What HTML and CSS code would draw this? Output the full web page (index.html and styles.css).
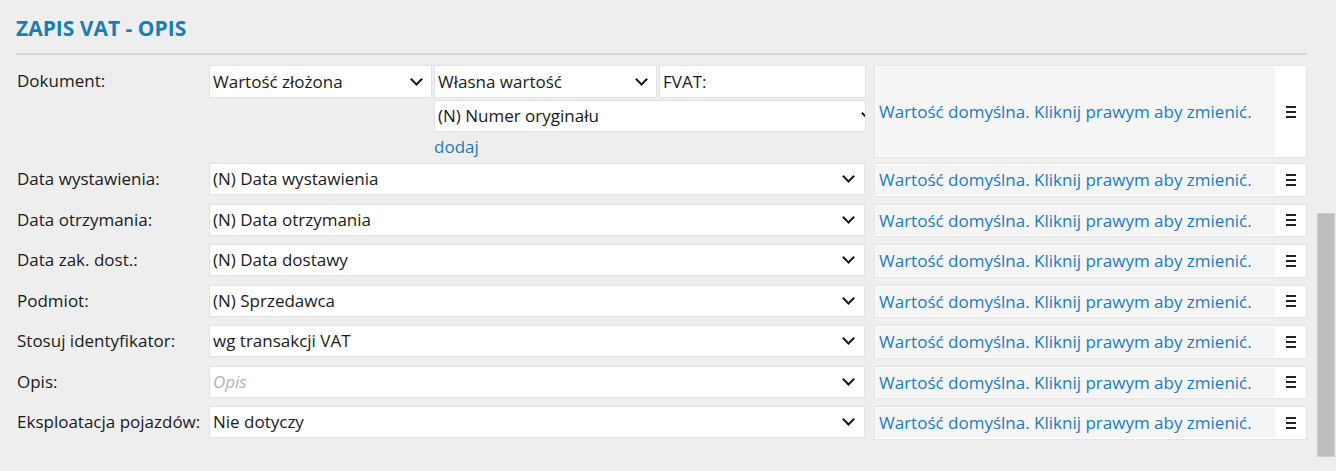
FILE: index.html
```html
<!DOCTYPE html>
<html lang="pl">
<head>
<meta charset="utf-8">
<title>Zapis VAT - Opis</title>
<link rel="stylesheet" href="styles.css">
</head>
<body>
<div class="page">
  <div class="content">
    <h1 class="title">ZAPIS VAT - OPIS</h1>
    <div class="rows">
      <div class="row row-doc">
        <div class="label">Dokument:</div>
        <div class="fields">
          <div class="doc-line">
            <div class="field select w-half"><span class="val">Wartość złożona</span><span class="chev"></span></div>
            <div class="field select w-half"><span class="val">Własna wartość</span><span class="chev"></span></div>
            <div class="field input w-fvat"><span class="val">FVAT:</span></div>
          </div>
          <div class="doc-sub">
            <div class="field select w-sub clip"><span class="val">(N) Numer oryginału</span><span class="chev chev-cut"></span></div>
            <a class="add">dodaj</a>
          </div>
        </div>
        <div class="hint tall"><span class="hint-text">Wartość domyślna. Kliknij prawym aby zmienić.</span><span class="menu"><i></i><i></i><i></i></span></div>
      </div>
      <div class="row">
        <div class="label">Data wystawienia:</div>
        <div class="fields"><div class="field select full"><span class="val">(N) Data wystawienia</span><span class="chev"></span></div></div>
        <div class="hint"><span class="hint-text">Wartość domyślna. Kliknij prawym aby zmienić.</span><span class="menu"><i></i><i></i><i></i></span></div>
      </div>
      <div class="row">
        <div class="label">Data otrzymania:</div>
        <div class="fields"><div class="field select full"><span class="val">(N) Data otrzymania</span><span class="chev"></span></div></div>
        <div class="hint"><span class="hint-text">Wartość domyślna. Kliknij prawym aby zmienić.</span><span class="menu"><i></i><i></i><i></i></span></div>
      </div>
      <div class="row">
        <div class="label">Data zak. dost.:</div>
        <div class="fields"><div class="field select full"><span class="val">(N) Data dostawy</span><span class="chev"></span></div></div>
        <div class="hint"><span class="hint-text">Wartość domyślna. Kliknij prawym aby zmienić.</span><span class="menu"><i></i><i></i><i></i></span></div>
      </div>
      <div class="row">
        <div class="label">Podmiot:</div>
        <div class="fields"><div class="field select full"><span class="val">(N) Sprzedawca</span><span class="chev"></span></div></div>
        <div class="hint"><span class="hint-text">Wartość domyślna. Kliknij prawym aby zmienić.</span><span class="menu"><i></i><i></i><i></i></span></div>
      </div>
      <div class="row">
        <div class="label">Stosuj identyfikator:</div>
        <div class="fields"><div class="field select full"><span class="val">wg transakcji VAT</span><span class="chev"></span></div></div>
        <div class="hint"><span class="hint-text">Wartość domyślna. Kliknij prawym aby zmienić.</span><span class="menu"><i></i><i></i><i></i></span></div>
      </div>
      <div class="row">
        <div class="label">Opis:</div>
        <div class="fields"><div class="field select full"><span class="val placeholder">Opis</span><span class="chev"></span></div></div>
        <div class="hint"><span class="hint-text">Wartość domyślna. Kliknij prawym aby zmienić.</span><span class="menu"><i></i><i></i><i></i></span></div>
      </div>
      <div class="row">
        <div class="label">Eksploatacja pojazdów:</div>
        <div class="fields"><div class="field select full"><span class="val">Nie dotyczy</span><span class="chev"></span></div></div>
        <div class="hint"><span class="hint-text">Wartość domyślna. Kliknij prawym aby zmienić.</span><span class="menu"><i></i><i></i><i></i></span></div>
      </div>
    </div>
  </div>
  <div class="scrolltrack"><div class="thumb"></div></div>
</div>
</body>
</html>
```

FILE: styles.css
```css
html, body {
  margin: 0;
  padding: 0;
  background: #eeeeee;
}
body {
  font-family: "Open Sans", "Noto Sans", "DejaVu Sans", sans-serif;
  font-size: 17px;
  color: #1a1a1a;
  width: 1336px;
  height: 471px;
  overflow: hidden;
}
.page {
  display: flex;
  align-items: flex-start;
}
.content {
  width: 1291px;
  margin-left: 16px;
}
.title {
  margin: 0;
  height: 55px;
  box-sizing: border-box;
  padding-top: 14px;
  font-size: 21px;
  font-weight: 700;
  line-height: 28px;
  color: #1a7db5;
  border-bottom: 2px solid #d8d8d8;
  letter-spacing: 0;
}
.rows {
  display: flex;
  flex-direction: column;
  gap: 7px;
  padding-top: 10px;
}
.row {
  display: grid;
  grid-template-columns: 193px 665px 433px;
  align-items: start;
  height: 33.5px;
}
.row-doc {
  height: 93px;
  margin-bottom: -2px;
}
.label {
  padding-left: 1px;
  line-height: 32px;
  white-space: nowrap;
}
.fields {
  display: flex;
  flex-direction: column;
}
.field {
  box-sizing: border-box;
  height: 33px;
  background: #ffffff;
  border: 1px solid #e3e3e3;
  display: flex;
  align-items: center;
  padding: 0 8px 0 3px;
  white-space: nowrap;
}
.val {
  flex: 1;
  line-height: 22px;
}
.placeholder {
  color: #b4b4b4;
  font-style: italic;
}
.chev {
  width: 7px;
  height: 7px;
  border-right: 2px solid #111;
  border-bottom: 2px solid #111;
  transform: rotate(45deg);
  margin: -5px 2px 0 0;
  flex: none;
}
.doc-line {
  display: flex;
  gap: 2px;
}
.w-half { width: 223px; }
.w-fvat { width: 207px; }
.doc-sub {
  margin-left: 225px;
  margin-top: 2px;
  display: flex;
  flex-direction: column;
}
.w-sub {
  width: 432px;
  height: 32px;
}
.clip {
  overflow: hidden;
  padding-right: 0;
}
.chev-cut {
  margin-right: -7px;
}
.add {
  color: #1a7bc4;
  line-height: 30px;
  padding-left: 0;
}
.full {
  width: 656px;
  height: 32px;
  padding-right: 9px;
}
.hint {
  box-sizing: border-box;
  height: 33.5px;
  background: #ffffff;
  border: 1px solid #e3e3e3;
  padding: 1px 0 1px 1px;
  display: flex;
  align-items: stretch;
}
.hint.tall {
  height: 93px;
}
.hint-text {
  width: 399px;
  background: #f5f5f5;
  color: #1a7bc4;
  padding-left: 3px;
  box-sizing: border-box;
  display: flex;
  align-items: center;
  white-space: nowrap;
}
.menu {
  flex: 1;
  display: flex;
  flex-direction: column;
  justify-content: center;
  align-items: center;
  gap: 3px;
  padding-left: 0;
}
.menu i {
  display: block;
  width: 10px;
  height: 2px;
  background: #222;
}
.scrolltrack {
  margin-left: 10px;
  padding-top: 213px;
}
.thumb {
  width: 16px;
  height: 242px;
  background: #bdbdbd;
  border: 1px solid #cdcdcd;
}
```
